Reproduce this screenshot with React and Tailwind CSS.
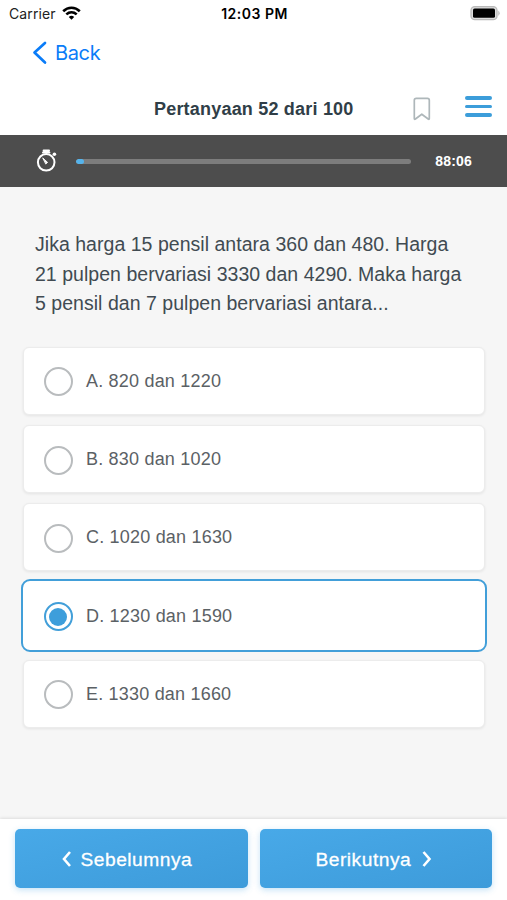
const OPTIONS = [
  'A. 820 dan 1220',
  'B. 830 dan 1020',
  'C. 1020 dan 1630',
  'D. 1230 dan 1590',
  'E. 1330 dan 1660',
];

function StatusBar() {
  return (
    <div className="grid h-7 grid-cols-3 items-center pl-[9px] pr-[7px] font-['Inter',sans-serif] text-black">
      <div className="flex items-center gap-[6px]">
        <span className="text-[14px] leading-none tracking-[0.12px] text-[#222]">Carrier</span>
        <svg className="-mt-[2px]" width="19" height="14" viewBox="0 0 19 14" fill="none" stroke="currentColor" strokeWidth="2.6">
          <path d="M1.2 5.2C6 .6 13 .6 17.8 5.2" />
          <path d="M4.3 8.4C7.4 5.6 11.6 5.6 14.7 8.4" />
          <path d="M6.8 10.9Q9.5 8.6 12.2 10.9L9.5 13.7Z" fill="currentColor" stroke="none" />
        </svg>
      </div>
      <div className="text-center text-[14px] leading-none font-semibold tracking-[0.5px] whitespace-nowrap">12:03 PM</div>
      <svg className="-mt-[2px] justify-self-end" width="30" height="15" viewBox="0 0 30 15">
        <rect x="1" y=".7" width="26" height="13" rx="3.8" fill="#ddd" stroke="#b9b9b9" strokeWidth="1.3" />
        <rect x="3" y="2.6" width="22" height="9.2" rx="1.6" fill="#000" />
        <path d="M28.3 4.5Q31 7.2 28.3 9.9Z" fill="#b9b9b9" />
      </svg>
    </div>
  );
}

function Header() {
  return (
    <>
      <div className="flex h-[50px] items-center gap-[8px] pl-8 text-[#0a7cf8]">
        <svg width="15" height="24" viewBox="0 0 15 24" fill="none" stroke="currentColor" strokeWidth="2.7" strokeLinecap="round" strokeLinejoin="round">
          <path d="M13 2L2.5 11.5L13 21.5" />
        </svg>
        <span className="font-['Inter',sans-serif] text-[20px] leading-none tracking-[-0.35px]">Back</span>
      </div>
      <div className="flex h-[57px] items-center pr-[15px] pl-[154px]">
        <h1 className="mt-[5px] w-[258px] text-[18px] leading-none font-bold tracking-[0.2px] whitespace-nowrap text-[#303e47]">Pertanyaan 52 dari 100</h1>
        <svg className="mt-[4px]" width="20" height="26" viewBox="0 0 20 26" fill="none" stroke="#aeb7ba" strokeWidth="1.7" strokeLinejoin="round">
          <path d="M2.3 4.2Q2.3 2.3 4.2 2.3H15.4Q17.3 2.3 17.3 4.2V22.6Q17.3 23.8 16.2 23L9.8 18.2L3.4 23Q2.3 23.8 2.3 22.6Z" />
        </svg>
        <div className="ml-auto flex w-[27px] flex-col gap-[5px]">
          <i className="h-[3.7px] rounded-full bg-[#3c9dda]" />
          <i className="h-[3.7px] rounded-full bg-[#3c9dda]" />
          <i className="h-[3.7px] rounded-full bg-[#3c9dda]" />
        </div>
      </div>
    </>
  );
}

function Timer() {
  return (
    <div className="flex h-[52px] items-center bg-[#4d4d4d] pr-[35px] pl-9 text-white">
      <svg className="-mt-[2px]" width="22" height="24" viewBox="0 0 22 24" fill="none" stroke="currentColor" strokeWidth="2" strokeLinecap="round">
        <circle cx="10.2" cy="14.3" r="8.3" />
        <path d="M7.6 2.6H13M7 4.4H13.4" strokeWidth="2" />
        <path d="M7 10.2L11.6 14.4L10 15.8Z" fill="currentColor" strokeWidth=".9" strokeLinejoin="round" />
        <circle cx="18.4" cy="6.2" r="1.8" fill="currentColor" stroke="none" />
      </svg>
      <div className="ml-[17.5px] h-[5px] w-[335px] overflow-hidden rounded-full bg-[#7d7d7d]">
        <div className="h-full w-[8px] rounded-full bg-[#55b3eb]" />
      </div>
      <span className="ml-auto text-[14px] leading-none font-bold tracking-[0.2px]">88:06</span>
    </div>
  );
}

function Option({ label, selected }) {
  return (
    <label
      className={
        selected
          ? '-mx-[2px] -my-[2.5px] flex h-[73.2px] items-center rounded-[9px] border-[2.5px] border-[#429fd9] bg-white pl-[21px]'
          : 'flex h-[68.2px] items-center rounded-[6px] border border-[#ececec] bg-white pl-[20px] shadow-[0_1px_3px_rgba(0,0,0,0.08)]'
      }
    >
      <span
        className={
          selected
            ? 'mt-[2px] flex size-[29px] items-center justify-center rounded-full border-[2.4px] border-[#429fd9]'
            : 'mt-[2px] flex size-[29px] rounded-full border-[2.4px] border-[#b9bcbe]'
        }
      >
        {selected && <span className="size-[18px] rounded-full bg-[#3d9edb]" />}
      </span>
      <span className="ml-[13.5px] text-[18px] leading-none tracking-[0.2px] text-[#5b6165]">{label}</span>
    </label>
  );
}

function Chevron({ d }) {
  return (
    <svg className="shrink-0" width="10" height="18" viewBox="0 0 10 18" fill="none" stroke="currentColor" strokeWidth="2.6">
      <path d={d} />
    </svg>
  );
}

const BUTTON =
  'flex h-[59px] w-[232.5px] items-center rounded-[5px] bg-linear-to-br from-[#48a9e8] to-[#3d9bda] text-[19.2px] leading-none tracking-[0.5px] text-white shadow-[0_2px_6px_rgba(64,160,225,0.3)] [-webkit-text-stroke:0.3px_white]';

export default function App() {
  return (
    <div className="flex h-[900px] w-[507px] flex-col overflow-hidden bg-white font-['Liberation_Sans',sans-serif]">
      <StatusBar />
      <Header />
      <Timer />
      <main className="flex-1 bg-[#f6f6f6] px-[22.5px] pt-[43.4px]">
        <p className="ml-[12.5px] text-[19.5px] leading-[29.3px] tracking-[0.03px] whitespace-nowrap text-[#414b52]">
          Jika harga 15 pensil antara 360 dan 480. Harga
          <br />
          21 pulpen bervariasi 3330 dan 4290. Maka harga
          <br />5 pensil dan 7 pulpen bervariasi antara...
        </p>
        <div className="mt-[28.6px] flex flex-col gap-[10px]">
          {OPTIONS.map((label, i) => (
            <Option key={label} label={label} selected={i === 3} />
          ))}
        </div>
      </main>
      <footer className="z-10 flex h-[81px] justify-between bg-white px-[15px] pt-[10px] shadow-[0_-1px_3px_rgba(0,0,0,0.1)]">
        <button className={`${BUTTON} pl-[46px]`}>
          <Chevron d="M9 2L3 9L9 16" />
          <span className="ml-[9.5px] pt-[2px]">Sebelumnya</span>
        </button>
        <button className={`${BUTTON} pl-[56px]`}>
          <span className="mr-[11px] pt-[2px]">Berikutnya</span>
          <Chevron d="M1.5 2L7.5 9L1.5 16" />
        </button>
      </footer>
    </div>
  );
}
